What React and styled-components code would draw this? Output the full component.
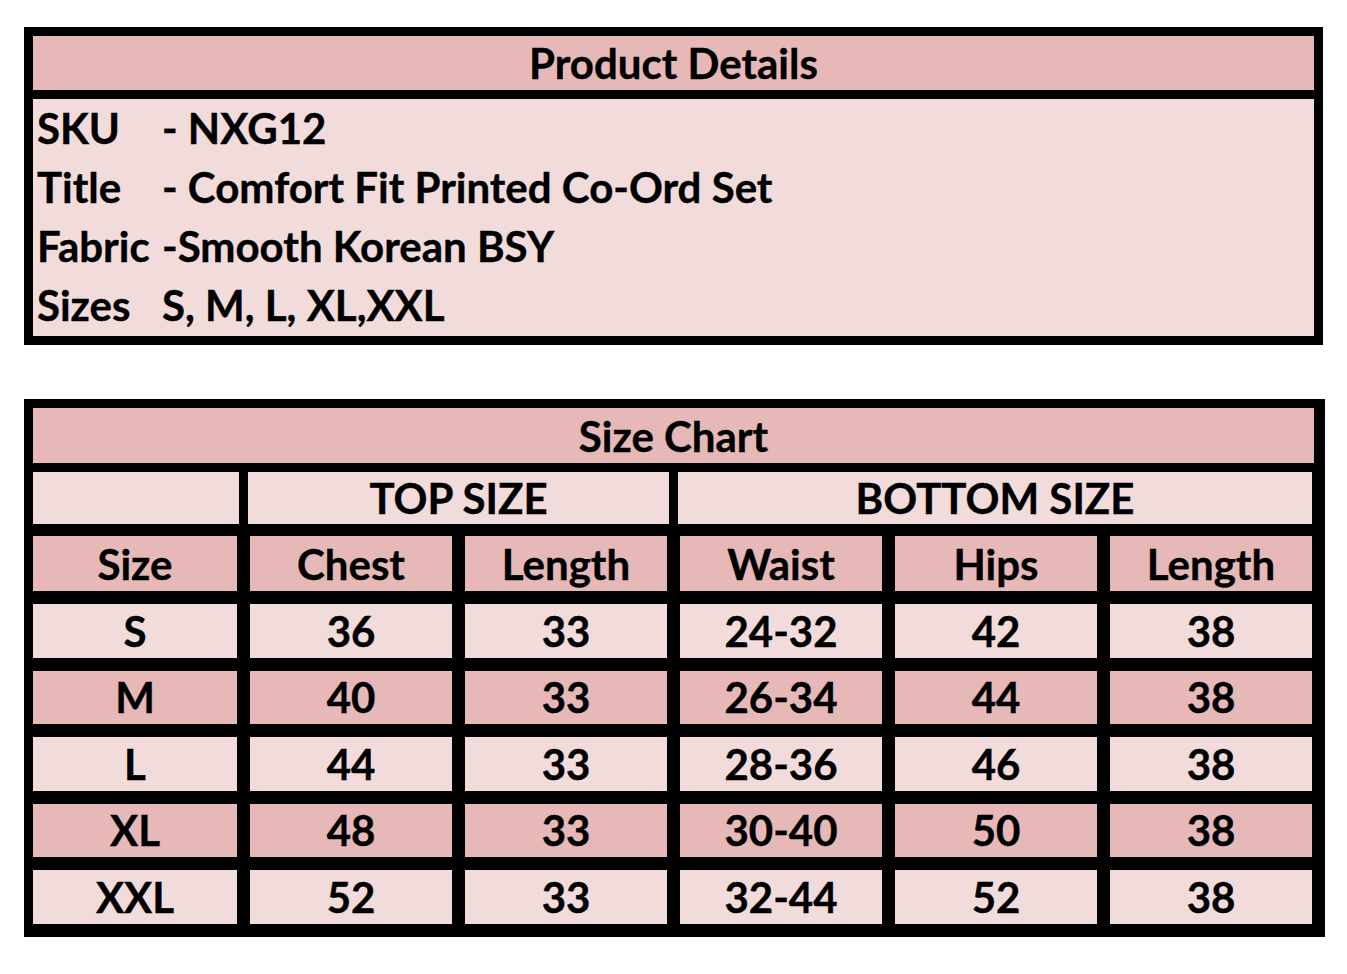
import React from "react";
import styled, { createGlobalStyle } from "styled-components";

const dark = "#e6b8b7";
const light = "#f2dcdb";

const details = [
  ["SKU", "- NXG12"],
  ["Title", "- Comfort Fit Printed Co-Ord Set"],
  ["Fabric", "-Smooth Korean BSY"],
  ["Sizes", "S, M, L, XL,XXL"],
];

const columns = ["Size", "Chest", "Length", "Waist", "Hips", "Length"];

const rows = [
  ["S", "36", "33", "24-32", "42", "38"],
  ["M", "40", "33", "26-34", "44", "38"],
  ["L", "44", "33", "28-36", "46", "38"],
  ["XL", "48", "33", "30-40", "50", "38"],
  ["XXL", "52", "33", "32-44", "52", "38"],
];

function App() {
  return (
    <>
      <GlobalStyle />
      <Page>
        <ProductBox>
          <BoxTitle>Product Details</BoxTitle>
          <DetailList>
            {details.map(([label, value]) => (
              <DetailLine key={label}>
                <Label>{label}</Label>
                <span>{value}</span>
              </DetailLine>
            ))}
          </DetailList>
        </ProductBox>

        <Chart>
          <ChartTitle>Size Chart</ChartTitle>
          <GroupRow>
            <Cell $tone={light} />
            <Cell $tone={light}>TOP SIZE</Cell>
            <Cell $tone={light}>BOTTOM SIZE</Cell>
          </GroupRow>
          <Body>
            {columns.map((c, i) => (
              <Cell key={`h${i}`} $tone={dark}>
                {c}
              </Cell>
            ))}
            {rows.map((r, ri) =>
              r.map((v, ci) => (
                <Cell key={`${ri}-${ci}`} $tone={ri % 2 ? dark : light}>
                  {v}
                </Cell>
              ))
            )}
          </Body>
        </Chart>
      </Page>
    </>
  );
}

const GlobalStyle = createGlobalStyle`
  body {
    margin: 0;
    background: #fff;
    font-family: Lato, "Open Sans", sans-serif;
    font-weight: 700;
    font-size: 42px;
    color: #000;
    -webkit-text-stroke: 0.4px #000;
  }
`;

const Page = styled.main`
  padding: 27px 0 0 24px;
  width: 1347px;
  box-sizing: border-box;
`;

const ProductBox = styled.section`
  width: 1299px;
  box-sizing: border-box;
  border: 9px solid #000;
  background: ${light};
`;

const BoxTitle = styled.div`
  height: 54px;
  background: ${dark};
  border-bottom: 9px solid #000;
  display: flex;
  align-items: center;
  justify-content: center;
`;

const DetailList = styled.div`
  height: 237px;
  padding: 0 0 0 4px;
  display: flex;
  flex-direction: column;
`;

const DetailLine = styled.div`
  display: flex;
  height: 60px;
  align-items: center;
  margin-top: -1px;
  margin-bottom: 1px;
  white-space: pre;
`;

const Label = styled.span`
  width: 125px;
`;

const Chart = styled.section`
  margin-top: 54px;
  width: 1301px;
  box-sizing: border-box;
  background: #000;
  padding: 9px 13px 13px 9px;
  display: flex;
  flex-direction: column;
`;

const ChartTitle = styled.div`
  height: 55px;
  margin-right: -2px;
  background: ${dark};
  display: flex;
  align-items: center;
  justify-content: center;
`;

const GroupRow = styled.div`
  margin-top: 9px;
  height: 52px;
  display: grid;
  grid-template-columns: 206px 421px 1fr;
  column-gap: 9px;
`;

const Body = styled.div`
  margin-top: 12px;
  display: grid;
  grid-template-columns: 204px repeat(5, 202px);
  grid-template-rows: 55px repeat(5, 53.5px);
  gap: 13px;
`;

const Cell = styled.div`
  background: ${(p) => p.$tone};
  display: flex;
  align-items: center;
  justify-content: center;
`;

export default App;
